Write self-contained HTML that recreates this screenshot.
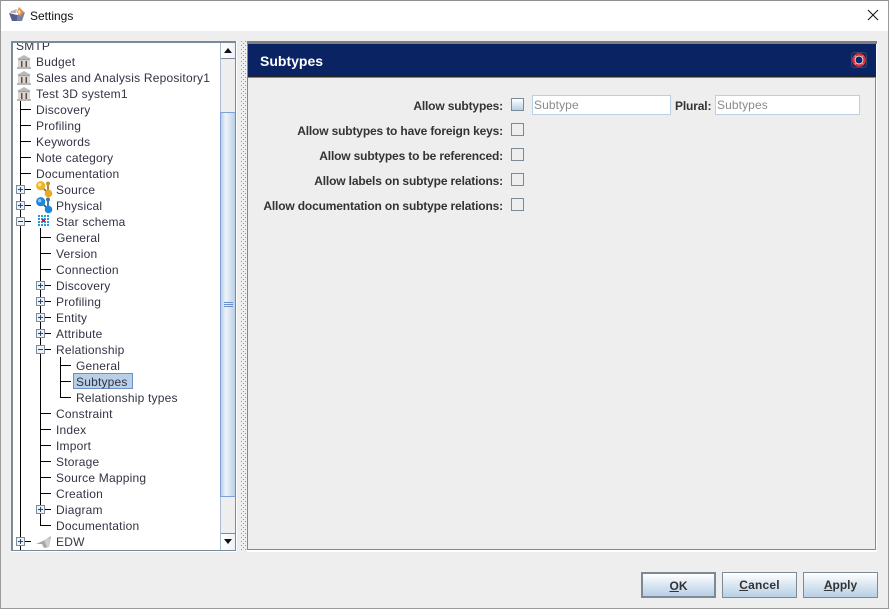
<!DOCTYPE html>
<html><head><meta charset="utf-8"><title>Settings</title>
<style>
html,body{margin:0;padding:0;width:889px;height:609px;overflow:hidden;background:#eee;font-family:"Liberation Sans",Arial,sans-serif;font-size:12px;color:#333}
div,span,svg{position:absolute;box-sizing:border-box}
.t{white-space:nowrap;line-height:16px;height:16px;color:#333344;letter-spacing:.2px}
.l{background:#000}
.h{background:#000;height:1px;width:10px}
.b{font-weight:bold;color:#333;white-space:nowrap;line-height:16px;text-align:right;left:248px;width:255px;height:16px;letter-spacing:-.155px}
.c{left:511px;width:13px;height:13px;border:1px solid #7a8a99;background:#eee}
.btn{top:572px;height:26px;width:75px;border:1px solid #7a8a99;background:linear-gradient(#fff,#dde8f3 45%,#b8cfe5);font-weight:bold;color:#333;text-align:center;line-height:25px}
.btn u{text-decoration:underline}
.inp{height:20px;top:95px;border:1px solid #b8cfe5;background:#fff;color:#8a8a8a;line-height:19px;padding-left:1px;white-space:nowrap;letter-spacing:.1px}
.x{width:9px;height:9px;border:1px solid #7a8a99;background:#eef2f7}
.x i{position:absolute;left:1px;top:3px;width:5px;height:1px;background:#2a3f7a}
.x b{position:absolute;left:3px;top:1px;width:1px;height:5px;background:#2a3f7a}
</style></head><body>
<div style="left:0;top:0;width:889px;height:609px;border:1px solid #9a9a9a;border-top-color:#8f8f8f"></div>
<div style="left:1px;top:1px;width:887px;height:30px;background:#fff"></div>
<svg style="left:8px;top:6px" width="18" height="17" viewBox="0 0 18 17"><path d="M1 7L9 9V15L4 15Z" fill="#50608a"/><path d="M9 9L17 6L14 15H9Z" fill="#6f7fa8"/><path d="M11 1L16 6L12 11L9 6Z" fill="#e58a3c"/><path d="M11 3L13 6L11 9L10 6Z" fill="#f6d9b8"/><path d="M3 5L9 3L8 7L2 7Z" fill="#b9b4b2"/></svg>
<div style="left:30px;top:8px;color:#111;line-height:16px;white-space:nowrap">Settings</div>
<svg style="left:867px;top:9px" width="12" height="12" viewBox="0 0 12 12"><path d="M1 1L11 11M11 1L1 11" stroke="#111" stroke-width="1" fill="none"/></svg>

<!-- tree panel -->
<div style="left:11px;top:41px;width:226px;height:511px;background:#fff"></div>
<div style="left:11px;top:41px;width:225px;height:510px;border:2px solid #7a8a99;border-bottom-width:1px;border-right-width:1px"></div>
<div id="tree" style="left:13px;top:43px;width:207px;height:507px;overflow:hidden;background:#fff">
<div style="left:-13px;top:-43px;width:240px;height:600px">
<div class="t" style="left:16px;top:38px">SMTP</div>
<svg style="left:16px;top:54px" width="16" height="16" viewBox="0 0 16 16"><path d="M8 1L15 5H1Z" fill="#b8b8b8"/><rect x="2" y="5" width="12" height="1.5" fill="#a0a0a0"/><rect x="2" y="7" width="12" height="6" fill="#d8d8d8"/><path d="M5 7h1.5v6H5zM9.500 7H11v6H9.500z" fill="#6b4a3a"/><rect x="1" y="13" width="14" height="2" fill="#b8b8b8"/></svg>
<div class="t" style="left:36px;top:54px">Budget</div>
<svg style="left:16px;top:70px" width="16" height="16" viewBox="0 0 16 16"><path d="M8 1L15 5H1Z" fill="#b8b8b8"/><rect x="2" y="5" width="12" height="1.5" fill="#a0a0a0"/><rect x="2" y="7" width="12" height="6" fill="#d8d8d8"/><path d="M5 7h1.5v6H5zM9.500 7H11v6H9.500z" fill="#6b4a3a"/><rect x="1" y="13" width="14" height="2" fill="#b8b8b8"/></svg>
<div class="t" style="left:36px;top:70px">Sales and Analysis Repository1</div>
<svg style="left:16px;top:86px" width="16" height="16" viewBox="0 0 16 16"><path d="M8 1L15 5H1Z" fill="#b8b8b8"/><rect x="2" y="5" width="12" height="1.5" fill="#a0a0a0"/><rect x="2" y="7" width="12" height="6" fill="#d8d8d8"/><path d="M5 7h1.5v6H5zM9.500 7H11v6H9.500z" fill="#6b4a3a"/><rect x="1" y="13" width="14" height="2" fill="#b8b8b8"/></svg>
<div class="t" style="left:36px;top:86px">Test 3D system1</div>

<!-- level 1 lines -->
<div class="l" style="left:20px;top:101px;width:1px;height:449px"></div>
<div class="h" style="left:21px;top:109px"></div>
<div class="h" style="left:21px;top:125px"></div>
<div class="h" style="left:21px;top:141px"></div>
<div class="h" style="left:21px;top:157px"></div>
<div class="h" style="left:21px;top:173px"></div>
<div class="h" style="left:21px;top:189px"></div>
<div class="h" style="left:21px;top:205px"></div>
<div class="h" style="left:21px;top:221px"></div>
<div class="h" style="left:21px;top:541px"></div>
<div class="t" style="left:36px;top:102px">Discovery</div>
<div class="t" style="left:36px;top:118px">Profiling</div>
<div class="t" style="left:36px;top:134px">Keywords</div>
<div class="t" style="left:36px;top:150px">Note category</div>
<div class="t" style="left:36px;top:166px">Documentation</div>

<div class="x" style="left:16px;top:185px"><i></i><b></b></div>
<svg style="left:36px;top:181px" width="17" height="17" viewBox="0 0 17 17"><path d="M5 5L13 13M12 3V12" stroke="#8a6a20" stroke-width="1.6"/><circle cx="4.700" cy="4.700" r="4.600" fill="#f0b428"/><circle cx="3.700" cy="3.700" r="1.700" fill="#fbe39a"/><circle cx="12" cy="2.500" r="2" fill="#c9962c"/><circle cx="12.500" cy="12.500" r="3.800" fill="#eda822"/></svg>
<div class="t" style="left:56px;top:182px">Source</div>
<div class="x" style="left:16px;top:201px"><i></i><b></b></div>
<svg style="left:36px;top:197px" width="17" height="17" viewBox="0 0 17 17"><path d="M5 5L13 13M12 3V12" stroke="#1a5a8a" stroke-width="1.6"/><circle cx="4.700" cy="4.700" r="4.600" fill="#1c86d8"/><circle cx="3.700" cy="3.700" r="1.700" fill="#8cc8f4"/><circle cx="12" cy="2.500" r="2" fill="#3a78a8"/><circle cx="12.500" cy="12.500" r="3.800" fill="#1c86d8"/></svg>
<div class="t" style="left:56px;top:198px">Physical</div>
<div class="x" style="left:16px;top:217px"><i></i></div>
<svg style="left:38px;top:215px" width="12" height="12" viewBox="0 0 12 12"><g fill="#2a9ae0"><rect x="0" y="0" width="2" height="2"/><rect x="3" y="0" width="2" height="2"/><rect x="6" y="0" width="2" height="2"/><rect x="9" y="0" width="2" height="2"/><rect x="0" y="3" width="2" height="2"/><rect x="3" y="3" width="2" height="2"/><rect x="6" y="3" width="2" height="2"/><rect x="9" y="3" width="2" height="2"/><rect x="0" y="6" width="2" height="2"/><rect x="3" y="6" width="2" height="2"/><rect x="6" y="6" width="2" height="2"/><rect x="9" y="6" width="2" height="2"/><rect x="0" y="9" width="2" height="2"/><rect x="3" y="9" width="2" height="2"/><rect x="6" y="9" width="2" height="2"/><rect x="9" y="9" width="2" height="2"/></g><rect x="4" y="4" width="3" height="3" fill="#e02020"/></svg>
<div class="t" style="left:56px;top:214px">Star schema</div>

<!-- level 2 lines -->
<div class="l" style="left:40px;top:228px;width:1px;height:298px"></div>
<div class="h" style="left:41px;top:237px"></div>
<div class="h" style="left:41px;top:253px"></div>
<div class="h" style="left:41px;top:269px"></div>
<div class="h" style="left:41px;top:285px"></div>
<div class="h" style="left:41px;top:301px"></div>
<div class="h" style="left:41px;top:317px"></div>
<div class="h" style="left:41px;top:333px"></div>
<div class="h" style="left:41px;top:349px"></div>
<div class="h" style="left:41px;top:413px"></div>
<div class="h" style="left:41px;top:429px"></div>
<div class="h" style="left:41px;top:445px"></div>
<div class="h" style="left:41px;top:461px"></div>
<div class="h" style="left:41px;top:477px"></div>
<div class="h" style="left:41px;top:493px"></div>
<div class="h" style="left:41px;top:509px"></div>
<div class="h" style="left:41px;top:525px"></div>
<div class="t" style="left:56px;top:230px">General</div>
<div class="t" style="left:56px;top:246px">Version</div>
<div class="t" style="left:56px;top:262px">Connection</div>
<div class="x" style="left:36px;top:281px"><i></i><b></b></div>
<div class="t" style="left:56px;top:278px">Discovery</div>
<div class="x" style="left:36px;top:297px"><i></i><b></b></div>
<div class="t" style="left:56px;top:294px">Profiling</div>
<div class="x" style="left:36px;top:313px"><i></i><b></b></div>
<div class="t" style="left:56px;top:310px">Entity</div>
<div class="x" style="left:36px;top:329px"><i></i><b></b></div>
<div class="t" style="left:56px;top:326px">Attribute</div>
<div class="x" style="left:36px;top:345px"><i></i></div>
<div class="t" style="left:56px;top:342px">Relationship</div>

<!-- level 3 -->
<div class="l" style="left:60px;top:357px;width:1px;height:41px"></div>
<div class="h" style="left:61px;top:365px"></div>
<div class="h" style="left:61px;top:381px"></div>
<div class="h" style="left:61px;top:397px"></div>
<div class="t" style="left:76px;top:358px">General</div>
<div style="left:73px;top:373px;width:60px;height:16px;background:#b8cfe5;border:1px solid #6b8fc9"></div>
<div class="t" style="left:76px;top:374px">Subtypes</div>
<div class="t" style="left:76px;top:390px">Relationship types</div>

<div class="t" style="left:56px;top:406px">Constraint</div>
<div class="t" style="left:56px;top:422px">Index</div>
<div class="t" style="left:56px;top:438px">Import</div>
<div class="t" style="left:56px;top:454px">Storage</div>
<div class="t" style="left:56px;top:470px">Source Mapping</div>
<div class="t" style="left:56px;top:486px">Creation</div>
<div class="x" style="left:36px;top:505px"><i></i><b></b></div>
<div class="t" style="left:56px;top:502px">Diagram</div>
<div class="t" style="left:56px;top:518px">Documentation</div>
<div class="x" style="left:16px;top:537px"><i></i><b></b></div>
<svg style="left:36px;top:535px" width="16" height="14" viewBox="0 0 16 14"><path d="M0 9L9 5L15 1L13 12L8 13L6 9Z" fill="#a8a8a8"/><path d="M8 5L11 12H13L14 3Z" fill="#cfcfcf"/></svg>
<div class="t" style="left:56px;top:534px">EDW</div>
</div></div>

<!-- scrollbar -->
<div style="left:220px;top:43px;width:16px;height:507px;background:#eee;border-left:1px solid #a9bcd2;border-right:1px solid #7a8a99"></div>
<div style="left:221px;top:43px;width:14px;height:16px;background:linear-gradient(90deg,#fff,#eef2f7);border-bottom:1px solid #7a8a99"></div>
<svg style="left:224px;top:48px" width="8" height="5" viewBox="0 0 8 5"><path d="M4 0L8 5H0Z" fill="#111"/></svg>
<div style="left:220px;top:112px;width:16px;height:385px;border:1px solid #7f9fd8;border-right-color:#7a8a99;background:linear-gradient(90deg,#b8cfe5,#eef4fa 35%,#dbe7f3 60%,#b8cfe5)"></div>
<div style="left:224px;top:302px;width:9px;height:1px;background:#6b8fc9"></div>
<div style="left:224px;top:304px;width:9px;height:1px;background:#6b8fc9"></div>
<div style="left:224px;top:306px;width:9px;height:1px;background:#6b8fc9"></div>
<div style="left:221px;top:533px;width:14px;height:17px;background:linear-gradient(90deg,#fff,#eef2f7);border-top:1px solid #7a8a99"></div>
<svg style="left:224px;top:539px" width="8" height="5" viewBox="0 0 8 5"><path d="M0 0H8L4 5Z" fill="#111"/></svg>

<!-- splitter dots -->
<svg style="left:240px;top:41px" width="6" height="510"><defs><pattern id="d" width="4" height="4" patternUnits="userSpaceOnUse"><rect x="1" y="0" width="1" height="1" fill="#8a98a8"/><rect x="3" y="2" width="1" height="1" fill="#8a98a8"/></pattern></defs><rect width="6" height="510" fill="url(#d)"/></svg>

<!-- right panel -->
<div style="left:247px;top:41px;width:630px;height:511px;background:#fff"></div>
<div style="left:247px;top:41px;width:629px;height:509px;border:1px solid #7a8a99;border-top:0;background:#eee"></div>
<div style="left:247px;top:41px;width:630px;height:3px;background:#808080"></div>
<div style="left:248px;top:44px;width:628px;height:33px;background:#0a2463;border-bottom:1px solid #222"></div>
<div style="left:248px;top:77px;width:627px;height:1px;background:#7a8a99"></div>
<div style="left:260px;top:52px;color:#fff;font-weight:bold;font-size:14px;line-height:18px;white-space:nowrap">Subtypes</div>
<svg style="left:851px;top:52px" width="16" height="16" viewBox="0 0 16 16"><rect x=".5" y=".5" width="15" height="15" rx="3" fill="none" stroke="#3a4668"/><circle cx="8" cy="8" r="5.500" fill="none" stroke="#d8303a" stroke-width="2.800"/><circle cx="8" cy="8" r="3.900" fill="none" stroke="#f2e8e8" stroke-width=".9"/><path d="M4.500 4.500L3.800 3.800M11.500 4.500L12.200 3.800M4.500 11.500L3.800 12.200M11.500 11.500L12.200 12.200" stroke="#f2d8d8" stroke-width="1"/></svg>

<div class="b" style="top:98px">Allow subtypes:</div>
<div class="b" style="top:123px">Allow subtypes to have foreign keys:</div>
<div class="b" style="top:148px">Allow subtypes to be referenced:</div>
<div class="b" style="top:173px">Allow labels on subtype relations:</div>
<div class="b" style="top:198px">Allow documentation on subtype relations:</div>
<div class="c" style="top:98px;background:linear-gradient(#fff,#b8cfe5)"></div>
<div class="c" style="top:123px"></div>
<div class="c" style="top:148px"></div>
<div class="c" style="top:173px"></div>
<div class="c" style="top:198px"></div>
<div class="inp" style="left:532px;width:139px">Subtype</div>
<div style="left:675px;top:98px;font-weight:bold;line-height:16px;color:#333;letter-spacing:-.15px">Plural:</div>
<div class="inp" style="left:715px;width:145px">Subtypes</div>

<!-- buttons -->
<div class="btn" style="left:641px;border:2px solid #7a8a99;line-height:24px"><u>O</u>K</div>
<div class="btn" style="left:722px;letter-spacing:.2px"><u>C</u>ancel</div>
<div class="btn" style="left:803px"><u>A</u>pply</div>
</body></html>
